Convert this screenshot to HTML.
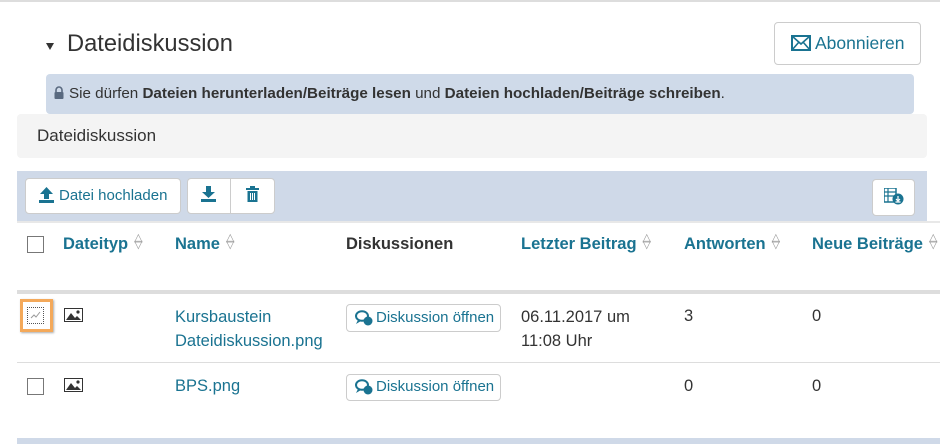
<!DOCTYPE html>
<html><head><meta charset="utf-8"><style>
*{box-sizing:border-box;margin:0;padding:0}
body{width:940px;height:444px;overflow:hidden;background:#fff;font-family:"Liberation Sans",Arial,sans-serif;color:#333;position:relative}
.a{position:absolute;white-space:nowrap}
.t{color:#1a7391}
.btn{position:absolute;background:#fff;border:1px solid #ccc;border-radius:4px}
.cb{position:absolute;width:17px;height:17px;border:1px solid #777;background:#fff}
.h{position:absolute;top:235px;font-size:16.5px;font-weight:bold;color:#1a7391;white-space:nowrap}
.s{display:inline-block;margin-left:6px;font-size:11px;color:#999;vertical-align:1px;line-height:7px;font-weight:normal}
.c{position:absolute;font-size:16.5px;white-space:nowrap}
</style></head><body>
<div class="a" style="left:0;top:0;width:940px;height:2px;background:#ddd"></div>
<div class="a" style="left:46px;top:43px;width:0;height:0;border-left:4.5px solid transparent;border-right:4.5px solid transparent;border-top:7px solid #333"></div>
<div class="a" style="left:67px;top:31px;font-size:23.7px;color:#333">Dateidiskussion</div>
<div class="btn" style="left:774px;top:22px;width:147px;height:43px;"></div>
<svg class="a" style="left:791px;top:35px" width="20" height="16" viewBox="0 0 20 16"><rect x="1" y="1" width="18" height="14" fill="none" stroke="#1a7391" stroke-width="2"/><path d="M1 1L10 9L19 1M1 15L8 7M19 15L12 7" fill="none" stroke="#1a7391" stroke-width="1.6"/></svg>
<div class="a t" style="left:815px;top:33px;font-size:17.5px">Abonnieren</div>
<div class="a" style="left:46px;top:74px;width:868px;height:40px;background:#cfdae9;border-radius:4px"></div>
<svg class="a" style="left:54px;top:86px" width="10" height="13" viewBox="0 0 10 13"><path d="M2 6V4a3 3 0 0 1 6 0v2" fill="none" stroke="#5a6a80" stroke-width="1.6"/><rect x="0.5" y="6" width="9" height="7" rx="1" fill="#5a6a80"/></svg>
<div class="a" style="left:69px;top:85px;font-size:15.2px;color:#333">Sie dürfen <b>Dateien herunterladen/Beiträge lesen</b> und <b>Dateien hochladen/Beiträge schreiben</b>.</div>
<div class="a" style="left:17px;top:114px;width:910px;height:44px;background:#f4f4f4;border-radius:4px"></div>
<div class="a" style="left:37px;top:126px;font-size:17px;color:#333">Dateidiskussion</div>
<div class="a" style="left:17px;top:171px;width:910px;height:51px;background:#cfd9e8"></div>
<div class="btn" style="left:25px;top:178px;width:156px;height:36px"></div>
<svg class="a" style="left:39px;top:187px" width="15" height="16" viewBox="0 0 15 16"><path d="M7.5 0L14 7H10V12H5V7H1Z M0 13H15V16H0Z" fill="#1a7391"/></svg>
<div class="a t" style="left:59px;top:187px;font-size:15px">Datei hochladen</div>
<div class="btn" style="left:187px;top:178px;width:88px;height:36px"></div>
<div class="a" style="left:230px;top:178px;width:1px;height:36px;background:#ccc"></div>
<svg class="a" style="left:201px;top:186px" width="15" height="16" viewBox="0 0 15 16"><path d="M5 0H10V6H14L7.5 12L1 6H5Z M0 13H15V16H0Z" fill="#1a7391"/></svg>
<svg class="a" style="left:246px;top:185px" width="13" height="17" viewBox="0 0 13 17"><path d="M0 3H13V5H0Z M4 1H9V3H4Z M1.5 6H11.5V17H1.5Z" fill="#1a7391"/><path d="M4.5 8V15M6.5 8V15M8.5 8V15" stroke="#fff" stroke-width="1"/></svg>
<div class="btn" style="left:872px;top:179px;width:43px;height:37px"></div>
<svg class="a" style="left:884px;top:188px" width="20" height="17" viewBox="0 0 20 17"><rect x="0" y="0" width="12" height="14" fill="none" stroke="#1a7391" stroke-width="1.5"/><path d="M0 4H12M0 8H12M4 0V14" stroke="#1a7391" stroke-width="1.2"/><circle cx="14" cy="11" r="5.5" fill="#1a7391"/><path d="M14 8V12M12 11L14 13L16 11M11.5 14H16.5" stroke="#fff" stroke-width="1.2" fill="none"/></svg>
<div class="a" style="left:17px;top:221px;width:923px;height:2px;background:#e8e8e8"></div>
<div class="cb" style="left:27px;top:236px"></div>
<div class="h" style="left:63px">Dateityp<span class="s">△<br>▽</span></div>
<div class="h" style="left:175px">Name<span class="s">△<br>▽</span></div>
<div class="h" style="left:346px;color:#333">Diskussionen</div>
<div class="h" style="left:521px">Letzter Beitrag<span class="s">△<br>▽</span></div>
<div class="h" style="left:684px">Antworten<span class="s">△<br>▽</span></div>
<div class="h" style="left:812px">Neue Beiträge<span class="s">△<br>▽</span></div>
<div class="a" style="left:17px;top:290px;width:923px;height:4px;background:#ddd"></div>
<div class="a" style="left:20px;top:299px;width:33px;height:33px;border:3px solid #f4a95a;box-shadow:1px 1px 2px #aaa"></div>
<div class="cb" style="left:27px;top:307px;border:1px dotted #555"></div>
<svg class="a" style="left:30px;top:311px" width="11" height="9"><path d="M1 7L4 4L6 6L10 1" fill="none" stroke="#999" stroke-width="1"/></svg>
<svg class="a" style="left:64px;top:308px" width="19" height="14" viewBox="0 0 19 14"><rect x="0.5" y="0.5" width="18" height="13" fill="#fff" stroke="#333"/><path d="M2 12L7 5L11 10L13 8L17 12Z" fill="#333"/><circle cx="14" cy="4" r="1.6" fill="#333"/></svg>
<div class="c t" style="left:175px;top:305px;line-height:24px">Kursbaustein<br>Dateidiskussion.png</div>
<div class="btn" style="left:346px;top:304px;width:155px;height:28px"></div>
<svg class="a" style="left:355px;top:310px" width="18" height="16" viewBox="0 0 18 16"><ellipse cx="7" cy="6" rx="6" ry="4.8" fill="none" stroke="#1a7391" stroke-width="2"/><path d="M3 10L1 14L6 11Z" fill="#1a7391"/><circle cx="13" cy="11" r="4.5" fill="#1a7391"/></svg>
<div class="a t" style="left:376px;top:309px;font-size:15px">Diskussion öffnen</div>
<div class="c" style="left:521px;top:305px;line-height:24px">06.11.2017 um<br>11:08 Uhr</div>
<div class="c" style="left:684px;top:307px">3</div>
<div class="c" style="left:812px;top:307px">0</div>
<div class="a" style="left:17px;top:362px;width:923px;height:1px;background:#ddd"></div>
<div class="cb" style="left:27px;top:378px"></div>
<svg class="a" style="left:64px;top:378px" width="19" height="14" viewBox="0 0 19 14"><rect x="0.5" y="0.5" width="18" height="13" fill="#fff" stroke="#333"/><path d="M2 12L7 5L11 10L13 8L17 12Z" fill="#333"/><circle cx="14" cy="4" r="1.6" fill="#333"/></svg>
<div class="c t" style="left:175px;top:377px">BPS.png</div>
<div class="btn" style="left:346px;top:374px;width:155px;height:27px"></div>
<svg class="a" style="left:355px;top:379px" width="18" height="16" viewBox="0 0 18 16"><ellipse cx="7" cy="6" rx="6" ry="4.8" fill="none" stroke="#1a7391" stroke-width="2"/><path d="M3 10L1 14L6 11Z" fill="#1a7391"/><circle cx="13" cy="11" r="4.5" fill="#1a7391"/></svg>
<div class="a t" style="left:376px;top:378px;font-size:15px">Diskussion öffnen</div>
<div class="c" style="left:684px;top:377px">0</div>
<div class="c" style="left:812px;top:377px">0</div>
<div class="a" style="left:17px;top:438px;width:923px;height:6px;background:#cfd9e8"></div>
</body></html>
